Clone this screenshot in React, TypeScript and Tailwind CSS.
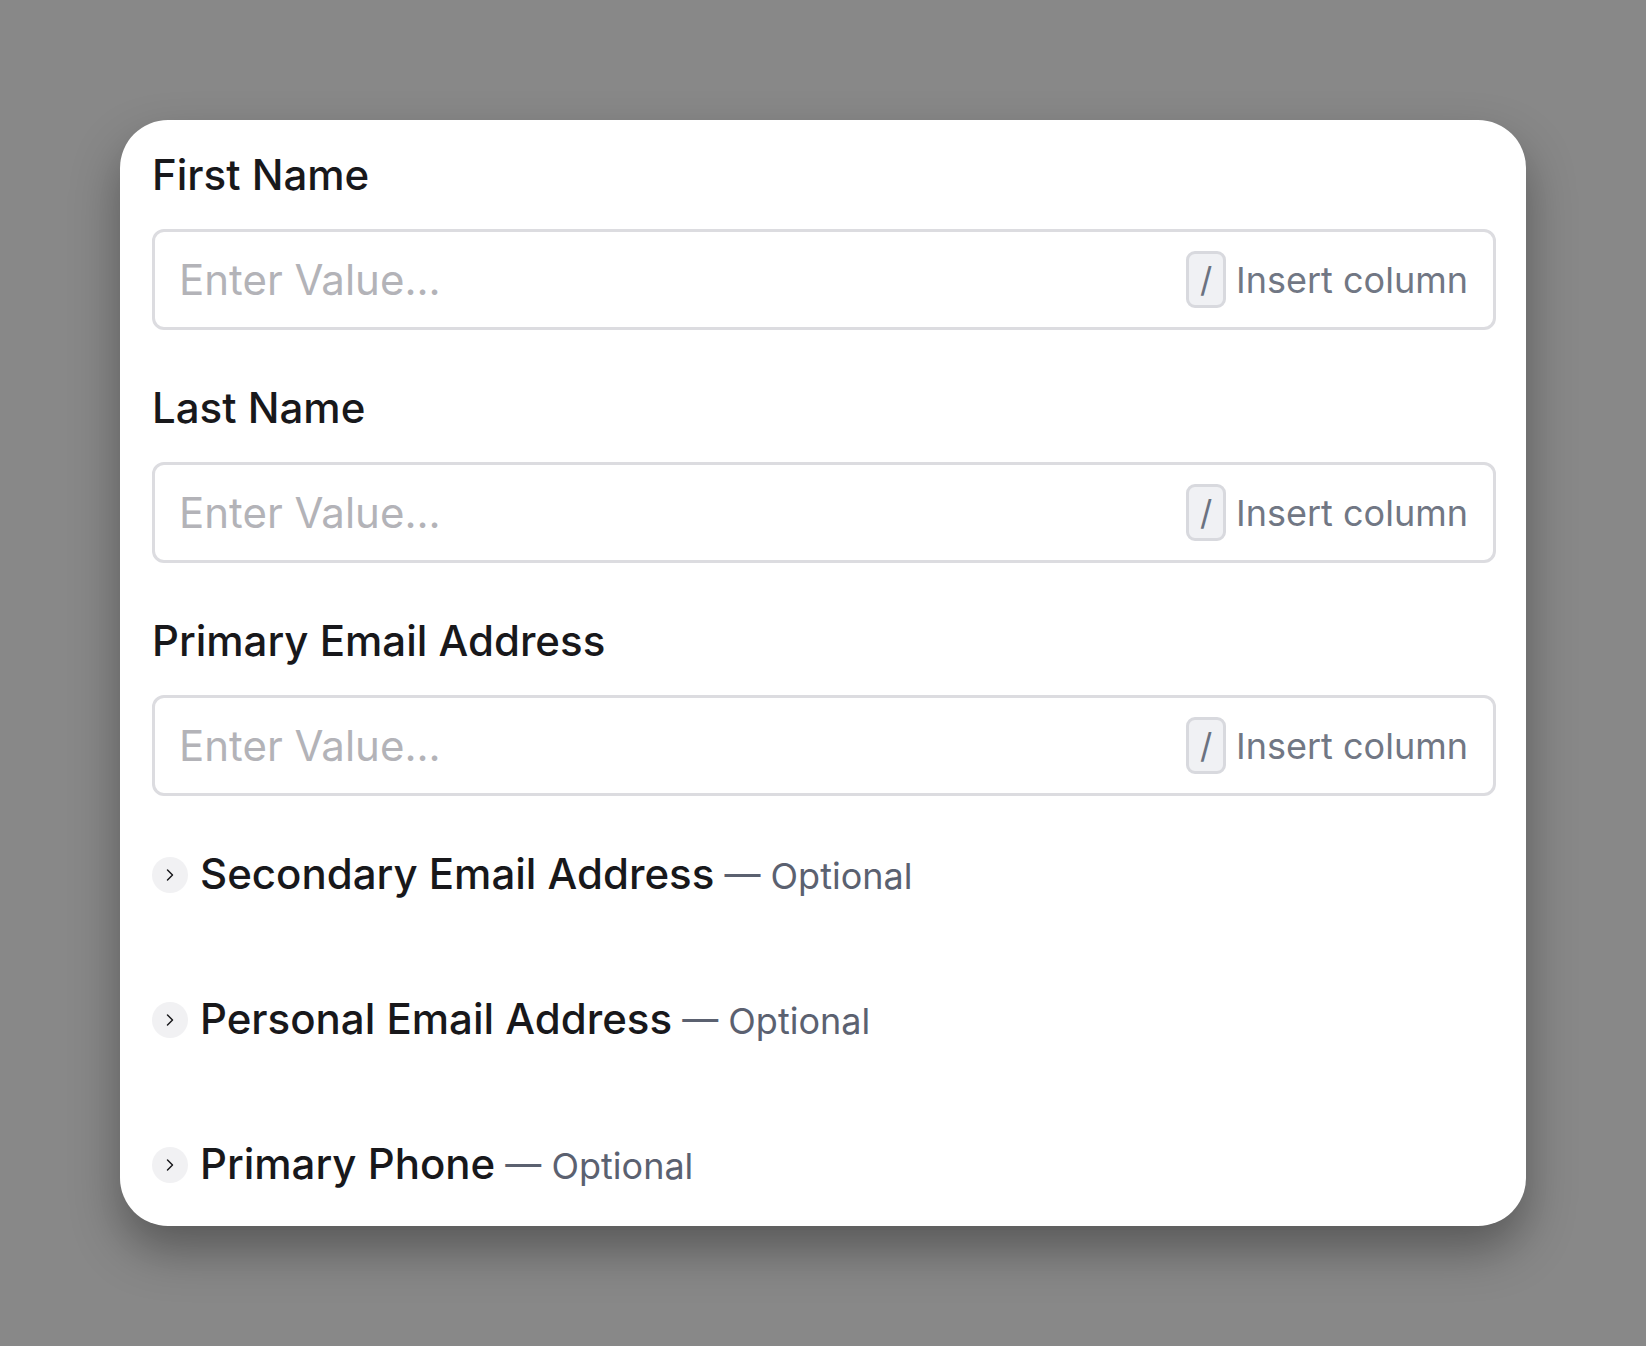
import { ChevronRight } from "lucide-react";

const fields = ["First Name", "Last Name", "Primary Email Address"];
const optionalFields = ["Secondary Email Address", "Personal Email Address", "Primary Phone"];

const Field = ({ label }: { label: string }) => (
  <div className="flex flex-col">
    <label className="text-[42px] leading-[48px] font-medium text-[#18181b]">{label}</label>
    <div className="mt-[30px] h-[101px] flex items-center rounded-[12px] border-[3px] border-[#dcdce0] bg-white pl-[24px] pr-[25px]">
      <input
        className="flex-1 bg-transparent outline-none text-[42px] text-[#18181b] placeholder:text-[#b3b3b8]"
        placeholder="Enter Value..."
      />
      <div className="flex items-center gap-[10px]">
        <span className="w-[40px] h-[57px] flex items-center justify-center rounded-[9px] border-[3px] border-[#d8d9de] bg-[#f0f1f4] text-[34px] text-[#6b7280]">
          /
        </span>
        <span className="text-[36px] text-[#717784]">Insert column</span>
      </div>
    </div>
  </div>
);

const OptionalRow = ({ label }: { label: string }) => (
  <button className="flex items-center gap-[12px] h-[48px] text-left">
    <span className="w-[36px] h-[36px] rounded-full bg-[#f1f1f3] flex items-center justify-center text-[#18181b]">
      <ChevronRight size={20} strokeWidth={1.75} />
    </span>
    <span className="text-[42px] leading-[48px] font-medium text-[#18181b]">
      {label}
      <span className="font-normal text-[#5b6170] text-[36px]"> — Optional</span>
    </span>
  </button>
);

export default function App() {
  return (
    <div
      className="min-h-screen w-full bg-[#888888] pt-[120px] pl-[120px]"
      style={{ fontFamily: "Inter, 'Noto Sans', sans-serif" }}
    >
      <div className="w-[1406px] h-[1106px] rounded-[48px] bg-white pl-[32px] pr-[30px] pt-[31px] shadow-[0_24px_48px_rgba(0,0,0,0.35)]">
        <div className="flex flex-col gap-[54px]">
          {fields.map((f) => (
            <Field key={f} label={f} />
          ))}
        </div>
        <div className="mt-[55px] flex flex-col gap-[97px]">
          {optionalFields.map((f) => (
            <OptionalRow key={f} label={f} />
          ))}
        </div>
      </div>
    </div>
  );
}
